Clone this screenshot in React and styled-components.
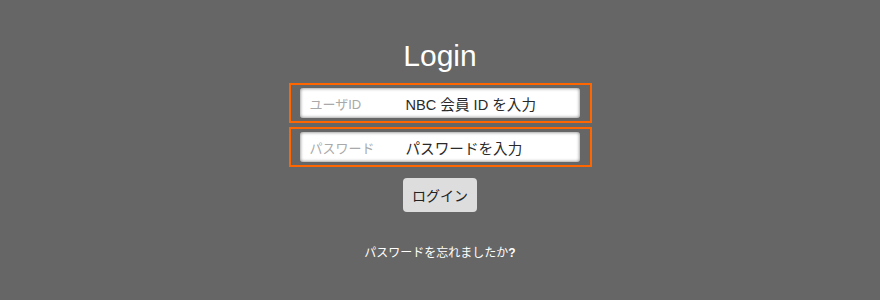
import React from "react";
import styled, { createGlobalStyle } from "styled-components";

const Global = createGlobalStyle`
  html, body { margin: 0; padding: 0; background: #666666; }
  body { font-family: "Liberation Sans", "Noto Sans CJK JP", sans-serif; }
`;

const Page = styled.div`
  width: 880px;
  height: 300px;
  background: #666666;
  display: flex;
  flex-direction: column;
  align-items: center;
  padding-top: 41px;
  box-sizing: border-box;
`;

const Title = styled.h1`
  margin: 0 0 12px;
  font-size: 30px;
  line-height: 30px;
  font-weight: normal;
  color: #ffffff;
`;

const Field = styled.div`
  border: 2px solid #ff6600;
  padding: 3px 10px 3px 9px;
  margin-bottom: ${(p) => p.$gap || 0}px;
`;

const InputBox = styled.div`
  width: 280px;
  height: 30px;
  box-sizing: border-box;
  background: #ffffff;
  border-radius: 3px;
  box-shadow: inset 0 0 3px 1px rgba(0, 0, 0, 0.35);
  display: flex;
  align-items: center;
  padding-left: 10px;
`;

const Label = styled.span`
  width: 96px;
  flex: none;
  font-size: 13px;
  color: #a9a9a9;
`;

const Value = styled.span`
  font-size: 14.6px;
  color: #2a2a2a;
`;

const Button = styled.button`
  margin-top: 11px;
  width: 74px;
  height: 34px;
  border: none;
  border-radius: 4px;
  background: #dddddd;
  color: #222222;
  font-family: inherit;
  font-size: 14px;
  padding: 0;
`;

const Forgot = styled.a`
  margin-top: 33px;
  font-size: 12px;
  color: #ffffff;
  text-decoration: none;
  line-height: 16px;
`;

const Mark = styled.b`
  font-weight: bold;
`;

export default function App() {
  return (
    <>
      <Global />
      <Page>
        <Title>Login</Title>
        <Field $gap={4}>
          <InputBox>
            <Label>ユーザID</Label>
            <Value>NBC 会員 ID を入力</Value>
          </InputBox>
        </Field>
        <Field>
          <InputBox>
            <Label>パスワード</Label>
            <Value>パスワードを入力</Value>
          </InputBox>
        </Field>
        <Button>ログイン</Button>
        <Forgot href="#">
          パスワードを忘れましたか<Mark>?</Mark>
        </Forgot>
      </Page>
    </>
  );
}
